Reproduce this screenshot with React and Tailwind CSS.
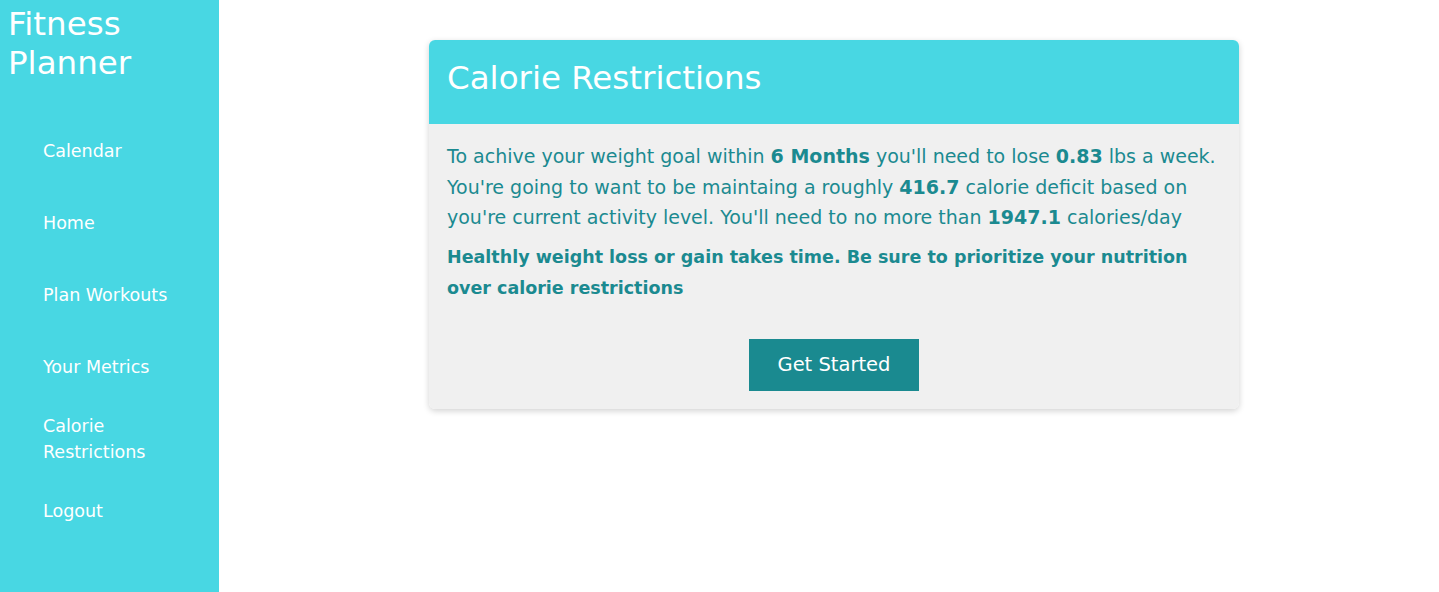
export default function App() {
  const navItems = ['Calendar', 'Home', 'Plan Workouts', 'Your Metrics'];

  return (
    <div className="flex h-[592px] w-full bg-white" style={{ fontFamily: '"DejaVu Sans", sans-serif' }}>
      {/* Sidebar */}
      <aside className="w-[219px] shrink-0 bg-[#48d7e3] text-white">
        <h1 className="px-2 pt-[5px] text-[32.5px] leading-[39px]">
          Fitness
          <br />
          Planner
        </h1>
        <nav className="mt-[32px] flex flex-col pl-[43px] text-[17.5px]">
          {navItems.map((item) => (
            <a key={item} className="flex h-[72px] items-center leading-[26px]">
              {item}
            </a>
          ))}
          <a className="flex h-[72px] items-center leading-[26px]">
            Calorie
            <br />
            Restrictions
          </a>
          <a className="flex h-[72px] items-center leading-[26px]">Logout</a>
        </nav>
      </aside>

      {/* Main */}
      <main className="flex-1 pl-[210px] pt-[40px]">
        <div className="w-[810px] rounded-md shadow-[0_2px_6px_rgba(0,0,0,0.18)]">
          <div className="flex h-[84px] items-center rounded-t-md bg-[#48d7e3] px-[18px] pb-[7px]">
            <h2 className="text-[32.5px] text-white">Calorie Restrictions</h2>
          </div>
          <div className="rounded-b-md bg-[#f0f0f0] px-[18px] pb-[18px] pt-[17px] text-[#1b8a90]">
            <p className="text-[19px] leading-[30.5px]">
              To achive your weight goal within <b>6 Months</b> you'll need to lose <b>0.83</b> lbs a week.
              <br />
              You're going to want to be maintaing a roughly <b>416.7</b> calorie deficit based on
              <br />
              you're current activity level. You'll need to no more than <b>1947.1</b> calories/day
            </p>
            <p className="mt-[9px] text-[17.5px] font-bold leading-[31px]">
              Healthly weight loss or gain takes time. Be sure to prioritize your nutrition
              <br />
              over calorie restrictions
            </p>
            <div className="mt-[35px] flex justify-center">
              <button className="h-[52px] w-[170px] bg-[#1a8a90] text-[19.5px] text-white">Get Started</button>
            </div>
          </div>
        </div>
      </main>
    </div>
  );
}
